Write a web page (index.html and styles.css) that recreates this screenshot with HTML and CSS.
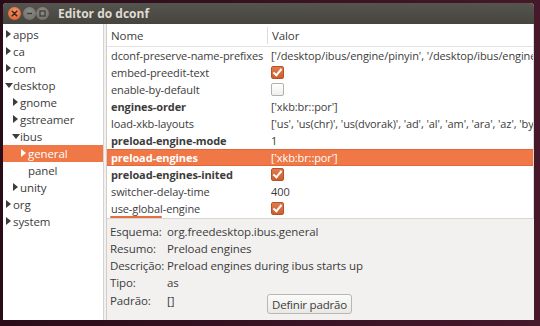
FILE: index.html
```html
<!DOCTYPE html>
<html lang="pt">
  <head>
    <meta charset="UTF-8" />
    <title>Editor do dconf</title>
    <link rel="stylesheet" href="styles.css">
  </head>
  <body>
    <div class="window">
      <div class="titlebar">
        <div class="wm-buttons">
          <span class="wm wm-close">
            <svg width="13" height="13" viewBox="0 0 13 13"><path d="M4.3 4.3 L8.7 8.7 M8.7 4.3 L4.3 8.7" stroke="#3b2418" stroke-width="1.6" stroke-linecap="round"/></svg>
          </span>
          <span class="wm">
            <svg width="13" height="13" viewBox="0 0 13 13"><path d="M4 6.5 H9" stroke="#3f3e3a" stroke-width="1.6"/></svg>
          </span>
          <span class="wm">
            <svg width="13" height="13" viewBox="0 0 13 13"><rect x="4" y="4" width="5" height="5" fill="none" stroke="#3f3e3a" stroke-width="1.3"/></svg>
          </span>
        </div>
        <span class="title">Editor do dconf</span>
      </div>

      <div class="content">
        <div class="tree">
          <div class="node lvl0"><i class="arrow closed"></i>apps</div>
          <div class="node lvl0"><i class="arrow closed"></i>ca</div>
          <div class="node lvl0"><i class="arrow closed"></i>com</div>
          <div class="node lvl0"><i class="arrow open"></i>desktop</div>
          <div class="node lvl1"><i class="arrow closed"></i>gnome</div>
          <div class="node lvl1"><i class="arrow closed"></i>gstreamer</div>
          <div class="node lvl1"><i class="arrow open"></i>ibus</div>
          <div class="node lvl2 selected"><i class="arrow closed"></i>general</div>
          <div class="node lvl2"><i class="arrow none"></i>panel</div>
          <div class="node lvl1"><i class="arrow closed"></i>unity</div>
          <div class="node lvl0"><i class="arrow closed"></i>org</div>
          <div class="node lvl0"><i class="arrow closed"></i>system</div>
        </div>

        <div class="handle"></div>

        <div class="main">
          <div class="keys">
            <div class="thead">
              <div class="col-name">Nome</div>
              <div class="col-value">Valor</div>
            </div>
            <div class="row">
              <div class="col-name">dconf-preserve-name-prefixes</div>
              <div class="col-value">['/desktop/ibus/engine/pinyin', '/desktop/ibus/engine/hangul']</div>
            </div>
            <div class="row">
              <div class="col-name">embed-preedit-text</div>
              <div class="col-value"><span class="check on"></span></div>
            </div>
            <div class="row">
              <div class="col-name">enable-by-default</div>
              <div class="col-value"><span class="check"></span></div>
            </div>
            <div class="row bold">
              <div class="col-name">engines-order</div>
              <div class="col-value">['xkb:br::por']</div>
            </div>
            <div class="row">
              <div class="col-name">load-xkb-layouts</div>
              <div class="col-value">['us', 'us(chr)', 'us(dvorak)', 'ad', 'al', 'am', 'ara', 'az', 'by', 'be']</div>
            </div>
            <div class="row bold">
              <div class="col-name">preload-engine-mode</div>
              <div class="col-value">1</div>
            </div>
            <div class="row bold selected">
              <div class="col-name">preload-engines</div>
              <div class="col-value">['xkb:br::por']</div>
            </div>
            <div class="row bold">
              <div class="col-name">preload-engines-inited</div>
              <div class="col-value"><span class="check on"></span></div>
            </div>
            <div class="row">
              <div class="col-name">switcher-delay-time</div>
              <div class="col-value">400</div>
            </div>
            <div class="row">
              <div class="col-name">use-global-engine</div>
              <div class="col-value"><span class="check on"></span></div>
            </div>
            <div class="hscroll"></div>
          </div>

          <div class="info">
            <div class="info-row"><span class="label">Esquema:</span><span>org.freedesktop.ibus.general</span></div>
            <div class="info-row"><span class="label">Resumo:</span><span>Preload engines</span></div>
            <div class="info-row"><span class="label">Descrição:</span><span>Preload engines during ibus starts up</span></div>
            <div class="info-row"><span class="label">Tipo:</span><span>as</span></div>
            <div class="info-row last">
              <span class="label">Padrão:</span><span class="default-value">[]</span>
              <button class="btn" type="button">Definir padrão</button>
            </div>
          </div>
        </div>
      </div>
    </div>
  </body>
</html>
```

FILE: styles.css
```css
body {
  margin: 0;
  width: 540px;
  height: 326px;
  overflow: hidden;
  padding: 3px 0 0 3px;
  box-sizing: border-box;
  background: linear-gradient(90deg, #2a0c18 0%, #3a1424 60%, #45182a 100%);
  font-family: "Open Sans", "Noto Sans", sans-serif;
  font-size: 11px;
  letter-spacing: -0.1px;
  color: #3c3c3c;
}

.window {
  width: 531px;
  height: 317px;
  display: flex;
  flex-direction: column;
  background-color: #f2f1f0;
  border-radius: 4px 4px 0 0;
  overflow: hidden;
}

.titlebar {
  height: 21px;
  flex: none;
  display: flex;
  align-items: center;
  background: linear-gradient(#55544f, #45443f);
  color: #dfdbd2;
}
.wm-buttons {
  display: flex;
  padding-left: 5px;
  width: 50px;
}
.wm {
  width: 13px;
  height: 13px;
  border-radius: 50%;
  background: radial-gradient(circle at 50% 35%, #8e8d88, #6a6964);
  display: flex;
}
.wm-buttons .wm:nth-child(2) {
  margin-left: 2px;
}
.wm-close {
  background: radial-gradient(circle at 50% 35%, #f59a6d, #dc5422);
}
.title {
  font-weight: bold;
  font-size: 12px;
  letter-spacing: 0;
}

.content {
  flex: 1;
  display: flex;
  min-height: 0;
}

.tree {
  width: 100px;
  flex: none;
  background-color: #fff;
  border-right: 1px solid #d4d3d0;
  padding-top: 2px;
}
.node {
  height: 17px;
  line-height: 17px;
  display: flex;
  align-items: center;
  white-space: nowrap;
  font-size: 11.5px;
}
.lvl0 { padding-left: 2px; }
.lvl1 { padding-left: 9px; }
.lvl2 { padding-left: 17px; }
.node.selected {
  background-color: #f07746;
  color: #fff;
}
.arrow {
  width: 8px;
  height: 17px;
  flex: none;
  position: relative;
}
.arrow.closed::before {
  content: "";
  position: absolute;
  left: 1px;
  top: 4px;
  border-left: 5px solid #3c3c3c;
  border-top: 4px solid transparent;
  border-bottom: 4px solid transparent;
}
.arrow.open::before {
  content: "";
  position: absolute;
  left: 0;
  top: 6px;
  border-top: 5px solid #3c3c3c;
  border-left: 4px solid transparent;
  border-right: 4px solid transparent;
}
.node.selected .arrow.closed::before {
  border-left-color: #fff;
}

.handle {
  width: 2px;
  flex: none;
  background-color: #f2f1f0;
}

.main {
  flex: 1;
  display: flex;
  flex-direction: column;
  min-width: 0;
  border-left: 1px solid #cfcecb;
}

.keys {
  height: 194px;
  flex: none;
  background-color: #fff;
  border-bottom: 1px solid #d8d7d4;
  border-right: 1px solid #dcdbd8;
  position: relative;
  overflow: hidden;
}
.thead {
  height: 23px;
  display: flex;
  align-items: center;
  border-bottom: 1px solid #e4e3e0;
  box-sizing: border-box;
  font-size: 11.5px;
}
.thead .col-name {
  border-right: 1px solid #dedddb;
  height: 17px;
  line-height: 17px;
}
.row {
  height: 17px;
  line-height: 17px;
  display: flex;
  white-space: nowrap;
}
.row.bold .col-name {
  font-weight: bold;
}
.row.selected {
  background-color: #f07746;
  color: #fff;
  box-shadow: inset 0 1px 0 #e0683a, inset 0 -1px 0 #e0683a;
}
.col-name {
  width: 156px;
  flex: none;
  padding-left: 4px;
}
.col-value {
  padding-left: 4px;
  white-space: nowrap;
  display: flex;
  align-items: center;
}

.check {
  width: 11px;
  height: 11px;
  border: 1px solid #b3b1ad;
  border-radius: 2px;
  background: linear-gradient(#fff, #f1f0ee);
  position: relative;
}
.check.on {
  border-color: #b25329;
  background: linear-gradient(#e27a4a, #cf5f30);
}
.check.on::after {
  content: "";
  position: absolute;
  left: 3px;
  top: 0px;
  width: 3px;
  height: 7px;
  border-right: 2px solid #fff;
  border-bottom: 2px solid #fff;
  transform: rotate(40deg);
}

.hscroll {
  position: absolute;
  left: 3px;
  bottom: 0;
  width: 52px;
  height: 2px;
  background-color: #e5703f;
  border-radius: 1px;
}

.info {
  flex: 1;
  padding: 4px 0 0 3px;
  font-size: 11.5px;
}
.info-row {
  height: 17px;
  line-height: 17px;
  display: flex;
  white-space: nowrap;
}
.label {
  width: 57px;
  flex: none;
}
.info-row.last {
  height: 24px;
  align-items: flex-start;
  padding-top: 1px;
}
.default-value {
  width: 100px;
}
.btn {
  margin-top: 2px;
  height: 20px;
  padding: 0 4px;
  font-family: inherit;
  font-size: 11.5px;
  letter-spacing: -0.2px;
  color: #3c3c3c;
  border: 1px solid #b9b7b2;
  border-radius: 3px;
  background: linear-gradient(#fbfbfa, #e9e8e5);
}
```
